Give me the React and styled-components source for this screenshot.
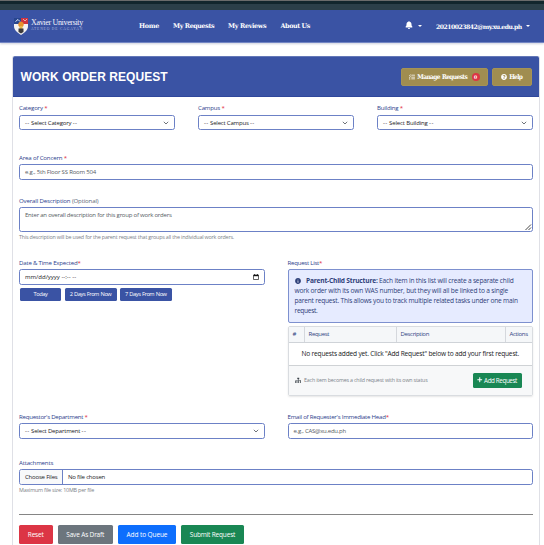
import React from "react";
import styled, { createGlobalStyle } from "styled-components";
import { FaBell, FaTasks, FaQuestionCircle, FaInfoCircle, FaSitemap, FaPlus } from "react-icons/fa";

const Global = createGlobalStyle`
  * { box-sizing: border-box; }
  body {
    margin: 0;
    background: #fff;
    font-family: "Open Sans", "Noto Sans", sans-serif;
    font-size: 6.6px;
    color: #2d3136;
    overflow: hidden;
  }
`;

const Page = styled.div`
  width: 544px;
  height: 545px;
  overflow: hidden;
`;
const BrowserEdge = styled.div`
  height: 10px;
  background: linear-gradient(#6a6b6b 0 1px, #12262d 1px 4px, #2b3f49 4px);
`;
const Nav = styled.nav`
  height: 33px;
  background: #3a53a4;
  border-bottom: 1px solid #7386c4;
  box-shadow: 0 1px 2px rgba(60, 70, 120, 0.25);
  display: flex;
  align-items: center;
  padding-left: 13px;
  color: #fff;
  font: bold 6.4px "DejaVu Serif", serif;
  white-space: nowrap;
`;
const Brand = styled.div`
  display: flex;
  width: 126px;
  gap: 2px;
  padding-top: 1px;
`;
const BrandText = styled.div`
  display: flex;
  flex-direction: column;
  padding-top: 1px;
  font-family: "Liberation Serif", serif;
  font-weight: normal;
`;
const BrandName = styled.span`
  font-size: 8px;
  line-height: 9px;
  letter-spacing: -0.33px;
  color: #f2f4fc;
`;
const BrandSub = styled.span`
  font-size: 3.6px;
  line-height: 4px;
  letter-spacing: 0.85px;
  color: #a9b5dd;
`;
const NavItem = styled.a`
  width: ${(p) => p.$w}px;
  font-size: ${(p) => p.$size || 6.4}px;
  letter-spacing: ${(p) => p.$ls || 0}px;
`;
const Bell = styled.span`
  display: flex;
  width: 13px;
  padding-bottom: 2px;
`;
const Caret = styled.i`
  border: 2px solid transparent;
  border-top-color: #fff;
  border-bottom: 0;
  margin: 0 ${(p) => p.$gap || 0}px 1px 0;
`;

const Card = styled.main`
  margin: 13px 4px 0 12px;
  height: 500px;
  border: 1px solid #dfe0e6;
  border-radius: 2px 2px 0 0;
  border-top: 0;
`;
const CardHead = styled.header`
  height: 41px;
  background: #3a53a4;
  border-top: 1px solid #6478b8;
  border-bottom: 1px solid #2f479b;
  border-radius: 2px 2px 0 0;
  display: flex;
  align-items: center;
  padding: 0 7.5px 0 7.5px;
  gap: 4px;
`;
const Title = styled.h1`
  flex: 1;
  margin: 0;
  font: bold 12px "Liberation Sans", sans-serif;
  letter-spacing: 0.07px;
  color: #fff;
`;
const GoldButton = styled.button`
  width: ${(p) => p.$w}px;
  height: 18px;
  padding: 0;
  border: 1px solid #a59355;
  border-radius: 2px;
  background: #a08d50;
  color: #fff;
  display: flex;
  align-items: center;
  justify-content: center;
  gap: 2px;
  white-space: nowrap;
  font: bold 6.5px "DejaVu Serif Condensed", "DejaVu Serif", serif;
  letter-spacing: -0.58px;
  word-spacing: 0.5px;
`;
const Badge = styled.span`
  width: 8px;
  height: 8px;
  margin-left: 2.5px;
  border-radius: 50%;
  background: #dc3545;
  font-size: 5px;
  letter-spacing: 0;
  line-height: 8px;
  text-align: center;
`;

const Form = styled.form`
  padding: 5px 6px 0 6px;
`;
const Row = styled.div`
  display: grid;
  grid-template-columns: repeat(${(p) => p.$cols || 1}, minmax(0, 1fr));
  column-gap: 23px;
  height: ${(p) => p.$h}px;
  margin-bottom: ${(p) => p.$gap}px;
  align-items: start;
`;
const Label = styled.label`
  display: block;
  height: 13px;
  line-height: ${(p) => p.$lh || 13}px;
  font-size: 6.1px;
  font-weight: ${(p) => p.$weight || 500};
  letter-spacing: ${(p) => p.$ls || -0.2}px;
  color: #2c418c;
  white-space: nowrap;
`;
const Star = styled.span`
  color: #e02b3c;
`;
const Muted = styled.span`
  color: #5d6778;
  font-weight: 400;
`;
const Control = styled.div`
  height: ${(p) => p.$h || 16}px;
  border: 1px solid #6c81c6;
  border-radius: 2.5px;
  background: #fff;
  display: flex;
  align-items: ${(p) => (p.$top ? "flex-start" : "center")};
  justify-content: space-between;
  padding: ${(p) => (p.$top ? "2px 0 0 5px" : "0 5px")};
  letter-spacing: ${(p) => p.$ls || 0}px;
  color: ${(p) => (p.$placeholder ? "#555b63" : "#1c2024")};
  white-space: nowrap;
  font-size: 6px;
  line-height: 10px;
`;
const Dashes = styled.span`
  letter-spacing: 0.4px;
`;
const Note = styled.p`
  margin: 0;
  height: 11px;
  line-height: 11px;
  font-size: 5.4px;
  letter-spacing: -0.2px;
  color: #7b8188;
  white-space: nowrap;
`;
const Resize = styled.svg`
  align-self: flex-end;
  display: block;
`;
const QuickDays = styled.div`
  display: flex;
  gap: 3.5px;
  padding: 3px 1px;
`;
const QuickButton = styled.button`
  width: ${(p) => p.$w}px;
  height: 13px;
  padding: 0 0 1px;
  border: 0;
  border-radius: 1.5px;
  background: #3a53a4;
  color: #fff;
  font: 500 5.7px "Open Sans", sans-serif;
  letter-spacing: -0.45px;
  word-spacing: 0.6px;
  white-space: nowrap;
`;
const Info = styled.div`
  height: 54px;
  border: 1px solid #7d90cf;
  border-radius: 2px;
  background: #e6ebff;
  color: #2e4079;
  padding: 6px 6px;
  font-size: 6.6px;
  line-height: 10px;
`;
const InfoLine = styled.div`
  letter-spacing: ${(p) => p.$ls || 0}px;
  white-space: nowrap;
  svg { margin-right: 5.5px; vertical-align: -0.5px; }
`;
const Table = styled.section`
  margin-top: 3px;
  height: 70px;
  border: 1px solid #d9dce0;
  border-radius: 2px;
  box-shadow: 0 1px 2px rgba(0, 0, 0, 0.1);
`;
const TableHead = styled.div`
  display: grid;
  grid-template-columns: 16px 92px 109px 1fr;
  height: 16px;
  background: #f5f7f9;
  border-bottom: 1px solid #cfd3d8;
`;
const Th = styled.span`
  padding-left: 4px;
  line-height: 14px;
  border-right: ${(p) => (p.$last ? 0 : 1)}px solid #d5d8dd;
  color: #2f437f;
  font-size: 6px;
  font-weight: 500;
  letter-spacing: -0.32px;
  white-space: nowrap;
`;
const Empty = styled.div`
  height: 23px;
  line-height: 22px;
  border-bottom: 1px solid #cfd2d5;
  text-align: center;
  font-size: 6.6px;
  color: #17191c;
  white-space: nowrap;
  letter-spacing: -0.185px;
`;
const TableFoot = styled.footer`
  height: 29px;
  background: #f7f8f9;
  display: flex;
  align-items: center;
  gap: 3px;
  padding: 0 10.5px 1px 6px;
  color: #3d444b;
`;
const FootText = styled.span`
  flex: 1;
  font-size: 5.3px;
  letter-spacing: -0.18px;
  color: #7c838a;
  white-space: nowrap;
`;
const ActionButton = styled.button`
  width: ${(p) => p.$w}px;
  height: ${(p) => p.$h || 19}px;
  padding: 0;
  border: 0;
  border-radius: 1.5px;
  background: ${(p) => p.$bg};
  color: #fff;
  display: flex;
  align-items: center;
  justify-content: center;
  gap: 1.5px;
  font: 500 ${(p) => p.$size || 6.5}px "Open Sans", sans-serif;
  letter-spacing: ${(p) => p.$ls || -0.17}px;
  white-space: nowrap;
`;
const FileButton = styled.span`
  width: 43px;
  height: 14px;
  margin-left: -5px;
  padding-left: 5px;
  line-height: 14px;
  border-right: 1px solid #6c81c6;
  border-radius: 2px 0 0 2px;
  background: #f8f9fa;
`;
const FileName = styled.span`
  flex: 1;
  padding-left: 5px;
`;
const Divider = styled.hr`
  margin: 18px 0 10px;
  border: 0;
  height: 1px;
  background: #858585;
`;
const Actions = styled.div`
  display: flex;
  gap: 5px;
`;

const Crest = () => (
  <svg width="16" height="19" viewBox="0 0 16 19">
    <path d="M1 1H15V9C15 13 12 15.5 8 18C4 15.5 1 13 1 9Z" fill="#f4f2f2" />
    <path d="M1 1H8V7H1Z" fill="#29468f" />
    <path d="M2.5 4.5L5 2.5L7 4.5" stroke="#dfe5f5" fill="none" strokeWidth="1" />
    <path d="M8 1H15V7H8Z" fill="#cf3540" />
    <path d="M10 2L12 4L14 2" stroke="#f0c9cc" fill="none" strokeWidth=".8" />
    <circle cx="8" cy="7.5" r="2.7" fill="#e8912d" />
    <path d="M6.5 9H9.5V12H6.5Z" fill="#e5b94c" />
    <path d="M5.5 11.5H10.5V15L8 16.5L5.5 15Z" fill="#3c3a3c" />
  </svg>
);
const Chevron = () => (
  <svg width="6" height="4" viewBox="0 0 6 4">
    <path d="M.8 .8L3 3L5.2 .8" stroke="#555b62" strokeWidth=".85" fill="none" />
  </svg>
);
const Calendar = () => (
  <svg width="6" height="6" viewBox="0 0 6 6">
    <path d="M.5 1.2H5.5V5.5H.5Z" stroke="#222" strokeWidth=".7" fill="none" />
    <path d="M.5 .8H5.5V2.2H.5Z" fill="#111" />
    <path d="M1.5 0V1M4.5 0V1" stroke="#111" strokeWidth=".7" />
  </svg>
);

const Select = ({ label, text, ls, lls, h, lh }) => (
  <div>
    <Label $ls={lls} $lh={lh}>{label} <Star>*</Star></Label>
    <Control $ls={ls} $h={h}>
      <span><Dashes>--</Dashes> {text} <Dashes>--</Dashes></span>
      <Chevron />
    </Control>
  </div>
);

export default function App() {
  return (
    <Page>
      <Global />
      <BrowserEdge />
      <Nav>
        <Brand>
          <Crest />
          <BrandText>
            <BrandName>Xavier University</BrandName>
            <BrandSub>ATENEO DE CAGAYAN</BrandSub>
          </BrandText>
        </Brand>
        <NavItem $w={34} $ls={-0.3}>Home</NavItem>
        <NavItem $w={55} $ls={-0.42}>My Requests</NavItem>
        <NavItem $w={52.5} $ls={-0.35}>My Reviews</NavItem>
        <NavItem $w={124.5} $ls={-0.4}>About Us</NavItem>
        <Bell><FaBell size={8} /></Bell>
        <Caret $gap={14} />
        <NavItem $w={90} $size={6.1} $ls={-0.5}>20210023842@my.xu.edu.ph</NavItem>
        <Caret />
      </Nav>
      <Card>
        <CardHead>
          <Title>WORK ORDER REQUEST</Title>
          <GoldButton $w={87}><FaTasks size={6} />Manage Requests<Badge>0</Badge></GoldButton>
          <GoldButton $w={39.5}><FaQuestionCircle size={6} />Help</GoldButton>
        </CardHead>
        <Form>
          <Row $cols={3} $h={28} $gap={21}>
            <Select label="Category" text="Select Category" h={15} ls={-0.19} lh={12} />
            <Select label="Campus" text="Select Campus" h={15} ls={-0.19} lh={12} />
            <Select label="Building" text="Select Building" h={15} ls={-0.15} lh={12} />
          </Row>
          <Row $h={29} $gap={14}>
            <div>
              <Label $ls={-0.17}>Area of Concern <Star>*</Star></Label>
              <Control $placeholder $ls={-0.185}>e.g., 5th Floor SS Room 504</Control>
            </div>
          </Row>
          <Row $h={49} $gap={13}>
            <div>
              <Label $ls={-0.15}>Overall Description <Muted>(Optional)</Muted></Label>
              <Control $h={25} $top $placeholder $ls={-0.215}>
                Enter an overall description for this group of work orders
                <Resize width="7" height="7" viewBox="0 0 7 7">
                  <path d="M.5 6L6 .5M3.5 6L6 3.5" stroke="#333" strokeWidth=".9" />
                </Resize>
              </Control>
              <Note>This description will be used for the parent request that groups all the individual work orders.</Note>
            </div>
          </Row>
          <Row $cols={2} $h={140} $gap={13.5}>
            <div>
              <Label>Date &amp; Time Expected<Star>*</Star></Label>
              <Control>mm/dd/yyyy --:-- --<Calendar /></Control>
              <QuickDays>
                <QuickButton type="button" $w={41}>Today</QuickButton>
                <QuickButton type="button" $w={52}>2 Days From Now</QuickButton>
                <QuickButton type="button" $w={51.5}>7 Days From Now</QuickButton>
              </QuickDays>
            </div>
            <div>
              <Label $weight={400} $ls={-0.25}>Request List<Star>*</Star></Label>
              <Info>
                <InfoLine $ls={-0.19}><FaInfoCircle size={6} /><b>Parent-Child Structure:</b> Each item in this list will create a separate child</InfoLine>
                <InfoLine $ls={-0.175}>work order with its own WAS number, but they will all be linked to a single</InfoLine>
                <InfoLine $ls={-0.21}>parent request. This allows you to track multiple related tasks under one main</InfoLine>
                <InfoLine $ls={-0.3}>request.</InfoLine>
              </Info>
              <Table>
                <TableHead>
                  <Th>#</Th><Th>Request</Th><Th>Description</Th><Th $last>Actions</Th>
                </TableHead>
                <Empty>No requests added yet. Click "Add Request" below to add your first request.</Empty>
                <TableFoot>
                  <FaSitemap size={6.5} />
                  <FootText>Each item becomes a child request with its own status</FootText>
                  <ActionButton type="button" $w={49} $h={15} $size={6.3} $ls={-0.4} $bg="#198754"><FaPlus size={5.5} />Add Request</ActionButton>
                </TableFoot>
              </Table>
            </div>
          </Row>
          <Row $cols={2} $h={29} $gap={17}>
            <Select label="Requestor's Department" text="Select Department" lls={-0.25} ls={-0.18} />
            <div>
              <Label $ls={-0.24}>Email of Requester's Immediate Head<Star>*</Star></Label>
              <Control $placeholder $ls={-0.25}>e.g., CAS@xu.edu.ph</Control>
            </div>
          </Row>
          <Row $h={40} $gap={0}>
            <div>
              <Label $ls={-0.18}>Attachments</Label>
              <Control $ls={-0.19}><FileButton>Choose Files</FileButton><FileName>No file chosen</FileName></Control>
              <Note>Maximum file size: 10MB per file</Note>
            </div>
          </Row>
          <Divider />
          <Actions>
            <ActionButton type="button" $w={33.5} $bg="#dc3545">Reset</ActionButton>
            <ActionButton type="button" $w={55.5} $bg="#6c757d">Save As Draft</ActionButton>
            <ActionButton type="button" $w={58} $ls={-0.1} $bg="#0d6efd">Add to Queue</ActionButton>
            <ActionButton type="button" $w={63} $bg="#198754">Submit Request</ActionButton>
          </Actions>
        </Form>
      </Card>
    </Page>
  );
}
